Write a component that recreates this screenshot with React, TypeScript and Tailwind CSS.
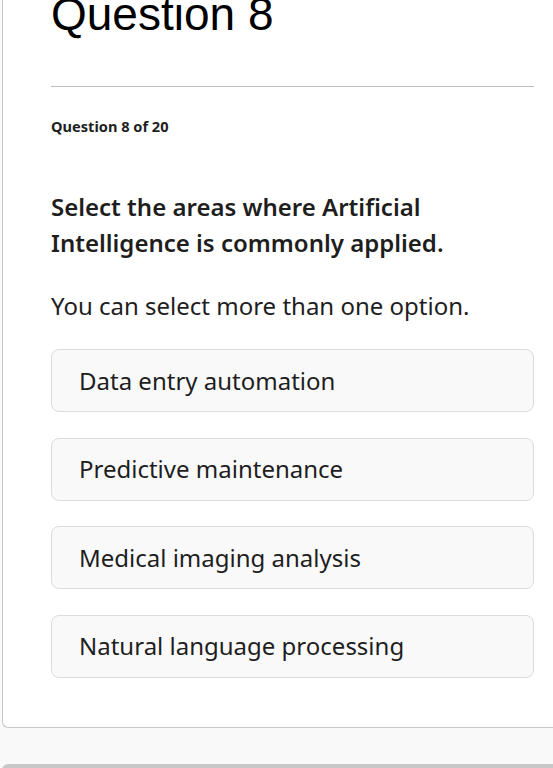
const options = [
  'Data entry automation',
  'Predictive maintenance',
  'Medical imaging analysis',
  'Natural language processing',
];

export default function App() {
  return (
    <div className="h-[768px] overflow-hidden bg-[#f9f9f9] pl-[2px] font-['Noto_Sans',sans-serif] text-[#1e1e1e]">
      <div className="w-[600px] rounded-bl-[6px] border-b border-l border-[#c8c8c8] bg-white pl-[48px] pb-[49px]">
        <div className="w-[483px]">
          <h1 className="-mt-[8px] font-['Liberation_Sans',Arial,sans-serif] text-[46px] leading-[45px] font-normal text-black">
            Question 8
          </h1>
          <div className="mt-[49px] h-px bg-[#bdbdbd]" />
          <p className="mt-[28px] text-[14.6px] leading-[22px] font-bold">Question 8 of 20</p>
          <p className="mt-[52px] text-[24px] leading-[36px] font-semibold">
            Select the areas where Artificial Intelligence is commonly applied.
          </p>
          <p className="mt-[27px] text-[24px] leading-[36px]">You can select more than one option.</p>
          <div className="mt-[25px] flex flex-col gap-[25.5px]">
            {options.map((o) => (
              <div
                key={o}
                className="flex h-[63px] items-center rounded-[8px] border border-[#dcdcdc] bg-[#f9f9f9] px-[27px] text-[24px]"
              >
                {o}
              </div>
            ))}
          </div>
        </div>
      </div>
      <div className="mt-[36px] h-[20px] rounded-tl-[6px] bg-[#c8c8c8]" />
    </div>
  );
}
